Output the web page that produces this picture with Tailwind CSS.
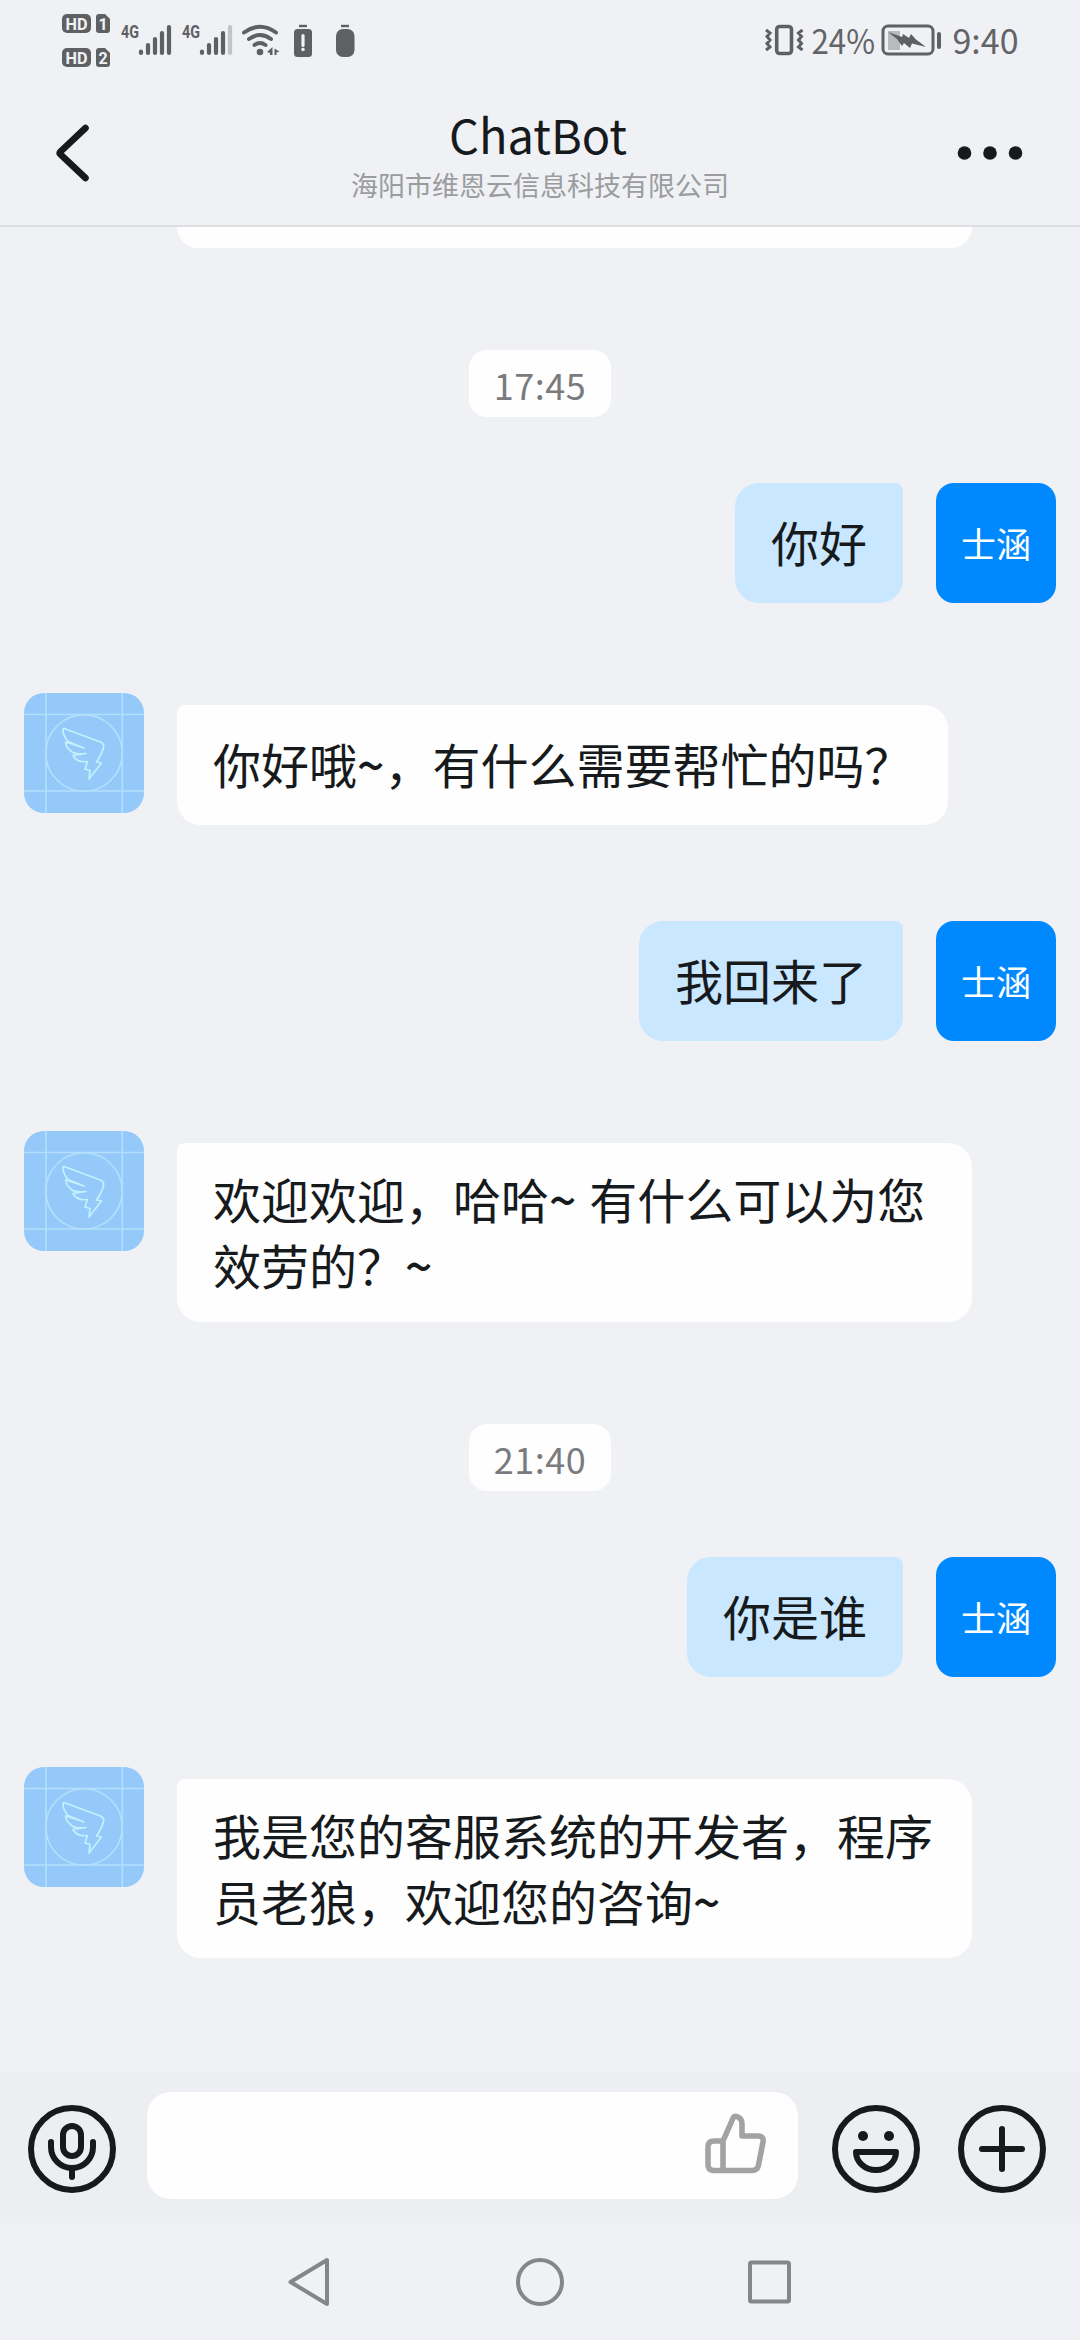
<!DOCTYPE html>
<html lang="zh-CN">
<head>
<meta charset="utf-8">
<title>ChatBot</title>
<script src="https://cdn.jsdelivr.net/npm/@tailwindcss/browser@4"></script>
</head>
<body class="w-[1080px] h-[2340px] overflow-hidden bg-[#eff1f4] font-['Noto_Sans_CJK_SC',sans-serif] text-[#171a1d] flex flex-col">

<!-- shared avatar artwork -->
<svg class="hidden">
  <symbol id="wing" viewBox="0 0 120 120">
    <rect width="120" height="120" fill="#94c9fa"/>
    <g fill="none" stroke="#b4e0fb" stroke-width="1.6">
      <path d="M22 0V120M98.300 0V120M0 21.500H120M0 98H120"/>
      <circle cx="60" cy="60" r="38.200"/>
    </g>
    <path d="M40 35.500L76.500 49Q80.500 51 79.500 54.500Q78 61 72.500 69L77.500 70L65 86L66 77.500L61 76L63.500 68.500Q53 70 49 62.500L62 60.500Q49 62 46 57Q42 54 41.500 49L60 55L44 48.500Q38.500 42 39 36Z" fill="none" stroke="#c4f1fd" stroke-width="1.700" stroke-linejoin="round"/>
  </symbol>
</svg>

<!-- status bar -->
<div class="h-20 shrink-0 flex justify-between pl-[60px] pr-[59px] font-['Roboto',sans-serif]">
  <div class="flex">
    <svg class="w-[60px] h-20" viewBox="60 0 60 80" fill="#5f6064">
      <rect x="62" y="14" width="29" height="19" rx="5"/><path d="M99 14H105L110 19V30Q110 33 107 33H99Q96 33 96 30V17Q96 14 99 14Z"/>
      <rect x="62" y="48" width="29" height="19" rx="5"/><path d="M99 48H105L110 53V64Q110 67 107 67H99Q96 67 96 64V51Q96 48 99 48Z"/>
      <g fill="#f1f2f5" font-size="17" font-weight="700">
        <text x="65.500" y="29.500" textLength="22" lengthAdjust="spacingAndGlyphs">HD</text><text x="98.500" y="29.500" font-size="16">1</text>
        <text x="65.500" y="63.500" textLength="22" lengthAdjust="spacingAndGlyphs">HD</text><text x="98.500" y="63.500" font-size="16">2</text>
      </g>
    </svg>
    <svg class="w-[60px] h-20" viewBox="120 0 60 80">
      <text x="121" y="38" font-size="18" font-weight="700" fill="#5f6064" textLength="18" lengthAdjust="spacingAndGlyphs">4G</text>
      <path d="M141 51.500V53M148 45V53M155 39V53M162 33V53M169 27V53" stroke="#5f6064" stroke-width="4.200" stroke-linecap="round"/>
    </svg>
    <svg class="w-[60px] h-20" viewBox="180 0 60 80">
      <text x="182" y="38" font-size="18" font-weight="700" fill="#5f6064" textLength="18" lengthAdjust="spacingAndGlyphs">4G</text>
      <path d="M202 51.500V53M209 45V53M216 39V53M223 33V53" stroke="#5f6064" stroke-width="4.200" stroke-linecap="round"/>
      <path d="M230 27V53" stroke="#c3c4c7" stroke-width="4.200" stroke-linecap="round"/>
    </svg>
    <svg class="w-[50px] h-20" viewBox="240 0 50 80">
      <g fill="none" stroke="#5f6064" stroke-width="4" stroke-linecap="round">
        <path d="M244 32.500Q260 21 276 32.500M249 39Q260 31 271 39M254.500 45Q260 41 265.500 45"/>
      </g>
      <circle cx="260" cy="52" r="3.300" fill="#5f6064"/>
      <path d="M267 52L272.500 47V55H270V53Z M274.500 48.500L279.500 51.500L276.500 52.500V55H274.500Z" fill="#5f6064"/>
    </svg>
    <svg class="w-[72px] h-20" viewBox="290 0 72 80">
      <path d="M299 26H307" stroke="#5f6064" stroke-width="2.400"/><rect x="294" y="29" width="18" height="28" rx="3.500" fill="#5f6064"/>
      <path d="M303 35.500V45.500" stroke="#f1f2f5" stroke-width="3.200" stroke-linecap="round"/><circle cx="303" cy="49.500" r="1.800" fill="#f1f2f5"/>
      <path d="M341 26H349" stroke="#5f6064" stroke-width="2.400"/><rect x="336" y="29" width="18.500" height="28" rx="7" fill="#5f6064"/>
    </svg>
  </div>
  <svg class="w-[260px] h-20" viewBox="760 0 260 80">
    <g fill="none" stroke="#5f6064">
      <rect x="775.700" y="26.500" width="14.800" height="27" rx="3" stroke-width="3.600"/>
      <path d="M765 30L769 33L766 36.500L769 40L766 43.500L769 47L765 50M801.500 30L797.500 33L800.500 36.500L797.500 40L800.500 43.500L797.500 47L801.500 50" stroke-width="3"/>
      <rect x="882" y="26" width="50" height="28" rx="5" stroke-width="3"/>
      <path d="M938 34V47" stroke-width="4" stroke-linecap="round"/>
    </g>
    <rect x="887" y="31" width="12" height="19" fill="#b9babd"/>
    <path d="M887 32L901 37L902 34L908 38L910 34L915 39.500L925 47L911 43.500L909 48L903 43L901 46L896 39Z" fill="#5f6064"/>
    <g fill="#636468" font-family="Noto Sans CJK SC" font-size="34.500">
      <text x="810.500" y="54" textLength="63.500" lengthAdjust="spacingAndGlyphs">24%</text>
      <text x="951.500" y="54" textLength="66" lengthAdjust="spacingAndGlyphs">9:40</text>
    </g>
  </svg>
</div>

<!-- title bar -->
<header class="h-[147px] shrink-0 flex items-center justify-between border-b-2 border-[#dcdee1] px-[50px]">
  <svg class="w-[76px] h-[72px]" viewBox="50 117 76 72"><path d="M85.500 128L60.500 151.500Q59 153 60.500 154.500L85.500 178" fill="none" stroke="#171a1d" stroke-width="6.600" stroke-linecap="round"/></svg>
  <div class="flex flex-col items-center pt-1.5">
    <h1 class="text-[47px] leading-[56px] -ml-1">ChatBot</h1>
    <p class="mt-[3px] text-[27px] leading-[40px] text-[#9a9c9f]">海阳市维恩云信息科技有限公司</p>
  </div>
  <svg class="w-[76px] h-5" viewBox="954 143 76 20" fill="#171a1d"><circle cx="964.500" cy="153" r="6.800"/><circle cx="990" cy="153" r="6.800"/><circle cx="1015.500" cy="153" r="6.800"/></svg>
</header>

<!-- conversation -->
<main class="h-[1845px] shrink-0 flex flex-col px-6 text-[48px] leading-[66px] whitespace-nowrap">
  <div class="ml-[153px] w-[795px] h-[21px] bg-[#fefefe] rounded-b-3xl"></div>
  <time class="mt-[102px] self-center w-[142px] h-[67px] rounded-[18px] bg-[#fefefe] text-[36px] tracking-[0.5px] text-[#797b7e] text-center leading-[69px]">17:45</time>

  <div class="mt-[66px] flex justify-end gap-[33px]">
    <div class="w-[168px] h-[120px] pt-[25px] px-9 bg-[#c9e7ff] rounded-3xl rounded-tr-lg">你好</div>
    <div class="size-[120px] rounded-[18px] bg-[#0089ff] text-white text-[35px] leading-[120px] text-center">士涵</div>
  </div>

  <div class="mt-[90px] flex gap-[33px]">
    <svg class="size-[120px] rounded-[20px]"><use href="#wing"/></svg>
    <div class="mt-3 w-[771px] h-[120px] pt-[25px] px-9 bg-[#fefefe] rounded-3xl rounded-tl-lg">你好哦<span class="font-medium">~</span>，有什么需要帮忙的吗？</div>
  </div>

  <div class="mt-24 flex justify-end gap-[33px]">
    <div class="w-[264px] h-[120px] pt-[25px] px-9 bg-[#c9e7ff] rounded-3xl rounded-tr-lg">我回来了</div>
    <div class="size-[120px] rounded-[18px] bg-[#0089ff] text-white text-[35px] leading-[120px] text-center">士涵</div>
  </div>

  <div class="mt-[90px] flex gap-[33px]">
    <svg class="size-[120px] rounded-[20px]"><use href="#wing"/></svg>
    <div class="mt-3 w-[795px] h-[179px] pt-[22px] px-9 bg-[#fefefe] rounded-3xl rounded-tl-lg [word-spacing:2px]">欢迎欢迎，哈哈<span class="font-medium">~</span> 有什么可以为您<br>效劳的？<span class="font-medium">~</span></div>
  </div>

  <time class="mt-[102px] self-center w-[142px] h-[67px] rounded-[18px] bg-[#fefefe] text-[36px] tracking-[0.5px] text-[#797b7e] text-center leading-[69px]">21:40</time>

  <div class="mt-[66px] flex justify-end gap-[33px]">
    <div class="w-[216px] h-[120px] pt-[25px] px-9 bg-[#c9e7ff] rounded-3xl rounded-tr-lg">你是谁</div>
    <div class="size-[120px] rounded-[18px] bg-[#0089ff] text-white text-[35px] leading-[120px] text-center">士涵</div>
  </div>

  <div class="mt-[90px] flex gap-[33px]">
    <svg class="size-[120px] rounded-[20px]"><use href="#wing"/></svg>
    <div class="mt-3 w-[795px] h-[179px] pt-[22px] px-9 bg-[#fefefe] rounded-3xl rounded-tl-lg">我是您的客服系统的开发者，程序<br>员老狼，欢迎您的咨询<span class="font-medium">~</span></div>
  </div>
</main>

<!-- composer -->
<div class="h-[151px] shrink-0 bg-[#eceef1] flex items-start pl-7 pr-[34px]">
  <svg class="mt-[33px] size-[88px]" viewBox="0 0 88 88" fill="none" stroke="#171a1d" stroke-width="6" stroke-linecap="round">
    <circle cx="44" cy="44" r="41"/><rect x="35" y="21" width="18" height="30" rx="9"/>
    <path d="M23 37V42A21 21 0 0 0 65 42V37M44 63V72"/>
  </svg>
  <div class="ml-[31px] mt-5 w-[651px] h-[107px] rounded-3xl bg-[#fefefe] flex items-start justify-end pt-[19px] pr-[32px]">
    <svg class="size-16" viewBox="702 2111 64 64" fill="none" stroke="#a3a3a3" stroke-width="5.600" stroke-linejoin="round">
      <path d="M723 2170.500V2141L733.300 2117.500Q734 2116 735.500 2116.300Q742 2117.500 742 2124V2136H758Q764 2136 763 2142L758.500 2165Q757.500 2170.500 752 2170.500H714Q708 2170.500 708 2164.500V2147Q708 2141 714 2141H723"/>
    </svg>
  </div>
  <svg class="mt-[33px] ml-[34px] size-[88px]" viewBox="0 0 88 88" fill="none" stroke="#171a1d" stroke-width="6" stroke-linejoin="round">
    <circle cx="44" cy="44" r="41"/><path d="M24 47H64A20 18 0 0 1 24 47Z"/>
    <g fill="#171a1d" stroke="none"><circle cx="31" cy="31" r="5"/><circle cx="57" cy="31" r="5"/></g>
  </svg>
  <svg class="mt-[33px] ml-[38px] size-[88px]" viewBox="0 0 88 88" fill="none" stroke="#171a1d" stroke-width="6" stroke-linecap="round">
    <circle cx="44" cy="44" r="41"/><path d="M44 24V64M24 44H64"/>
  </svg>
</div>

<!-- system navigation -->
<nav class="flex-1 flex justify-center items-start gap-[179px] pt-[34px]">
  <svg class="size-[50px]" viewBox="284 2257 50 50" fill="none" stroke="#858689" stroke-width="4" stroke-linejoin="round"><path d="M325 2260V2304L288.500 2282Z"/></svg>
  <svg class="size-[50px]" viewBox="0 0 50 50" fill="none" stroke="#858689" stroke-width="4"><circle cx="25" cy="25" r="22"/></svg>
  <svg class="size-[50px]" viewBox="0 0 50 50" fill="none" stroke="#858689" stroke-width="4"><rect x="6" y="5.500" width="39" height="39" rx="1.500"/></svg>
</nav>
</body>
</html>
